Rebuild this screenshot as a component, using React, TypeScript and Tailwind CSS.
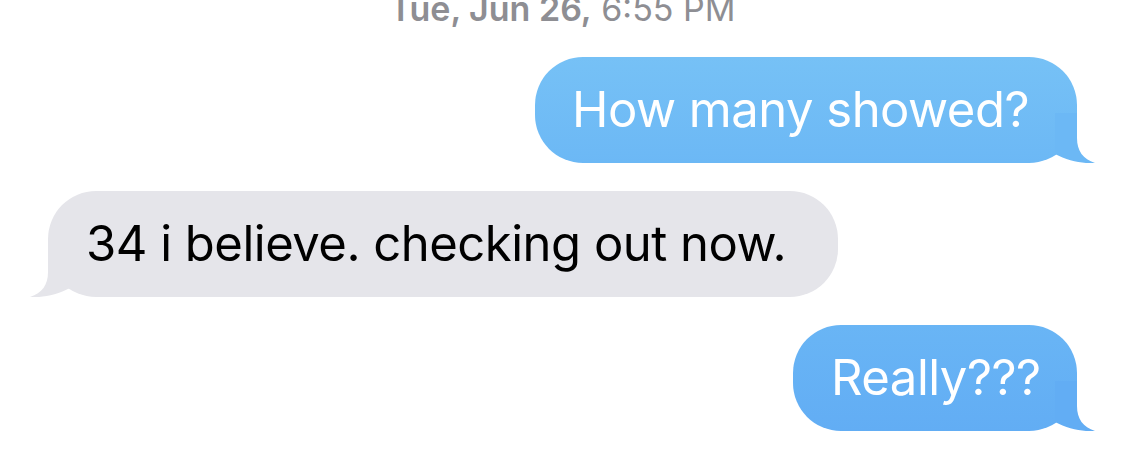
import React from "react";

const FONT = { fontFamily: 'Inter, "Noto Sans", sans-serif' };

function Tail({ side, color }: { side: "left" | "right"; color: string }) {
  return (
    <svg
      width="68"
      height="50"
      viewBox="0 0 68 50"
      className={
        side === "right"
          ? "absolute bottom-0 right-[-18px]"
          : "absolute bottom-0 left-[-18px] -scale-x-100"
      }
    >
      <path
        d="M50 0 L50 25 C50 38 56 46 68 50 C57 51 41 48 28 41 L28 0 Z"
        fill={color}
      />
    </svg>
  );
}

export default function App() {
  return (
    <div className="w-[1125px] h-[476px] bg-white overflow-hidden" style={FONT}>
      <div className="flex flex-col px-[48px]">
        <div className="mt-[-11px] h-[40px] text-center text-[34px] leading-[40px] text-[#8e8e93]">
          <span className="font-semibold">Tue, Jun 26,</span> 6:55 PM
        </div>
        <div className="mt-[28px] flex justify-end">
          <div className="relative w-[542px] h-[106px] rounded-[48px] bg-gradient-to-b from-[#76c1f6] to-[#6cb8f5] pl-[37px] flex items-center">
            <span className="text-white text-[49px] tracking-[-0.5px] leading-[60px] relative z-10">How many showed?</span>
            <Tail side="right" color="#6cb8f5" />
          </div>
        </div>
        <div className="mt-[28px] flex justify-start">
          <div className="relative w-[790px] h-[106px] rounded-[48px] bg-[#e5e5ea] pl-[38px] flex items-center">
            <span className="text-black text-[49px] tracking-[-0.5px] leading-[60px] relative z-10">34 i believe. checking out now.</span>
            <Tail side="left" color="#e5e5ea" />
          </div>
        </div>
        <div className="mt-[28px] flex justify-end">
          <div className="relative w-[284px] h-[106px] rounded-[48px] bg-gradient-to-b from-[#69b5f5] to-[#62adf4] pl-[38px] flex items-center">
            <span className="text-white text-[49px] tracking-[-0.5px] leading-[60px] relative z-10">Really???</span>
            <Tail side="right" color="#62adf4" />
          </div>
        </div>
      </div>
    </div>
  );
}
